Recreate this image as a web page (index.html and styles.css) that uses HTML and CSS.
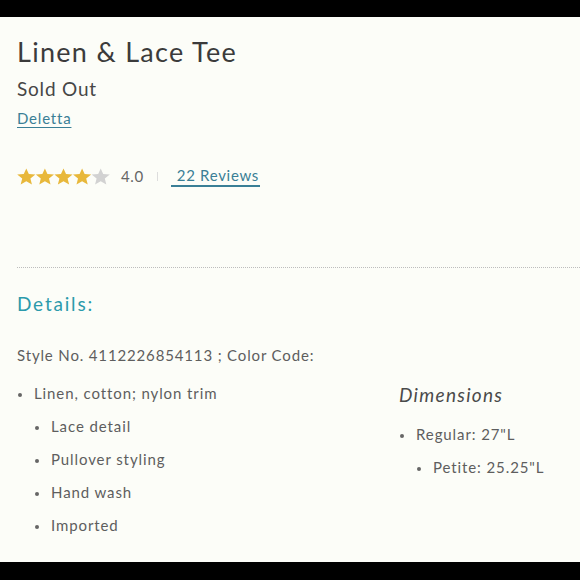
FILE: index.html
```html
<!DOCTYPE html>
<html lang="en">
<head>
    <meta charset="UTF-8">
    <meta name="viewport" content="width=device-width, initial-scale=1.0">
    <title>Linen &amp; Lace Tee</title>
    <link rel="stylesheet" href="styles.css">
</head>
<body>
    <div class="page">
        <div class="product">
            <h1 class="title">Linen &amp; Lace Tee</h1>
            <p class="status">Sold Out</p>
            <a class="brand" href="#">Deletta</a>
            <div class="rating">
                <svg class="stars" width="94" height="17" viewBox="0 0 94 17">
                    <defs>
                        <polygon id="star" points="9.3,0.5 11.83,6.12 18.4,6.61 13.4,10.57 14.93,16.49 9.3,13.32 3.67,16.49 5.2,10.57 0.2,6.61 6.77,6.12"/>
                    </defs>
                    <g fill="#e8b83b">
                        <use href="#star"/>
                        <use href="#star" x="18.6"/>
                        <use href="#star" x="37.2"/>
                        <use href="#star" x="55.8"/>
                    </g>
                    <use href="#star" x="74.4" fill="#d2d2d2"/>
                </svg>
                <span class="score">4.0</span>
                <span class="sep"></span>
                <a class="reviews" href="#">22 Reviews</a>
            </div>
        </div>

        <hr class="divider">

        <div class="details">
            <h2>Details:</h2>
            <p class="style-no">Style No. 4112226854113 ; Color Code:</p>
            <div class="cols">
                <ul class="list">
                    <li>Linen, cotton; nylon trim
                        <ul class="list">
                            <li>Lace detail</li>
                            <li>Pullover styling</li>
                            <li>Hand wash</li>
                            <li>Imported</li>
                        </ul>
                    </li>
                </ul>
                <div class="dims">
                    <h3>Dimensions</h3>
                    <ul class="list">
                        <li>Regular: 27"L
                            <ul class="list">
                                <li>Petite: 25.25"L</li>
                            </ul>
                        </li>
                    </ul>
                </div>
            </div>
        </div>
    </div>
</body>
</html>
```

FILE: styles.css
```css
html, body {
    margin: 0;
    background: #000;
}
body {
    padding: 17px 0 18px;
    font-family: "Lato", "Open Sans", sans-serif;
    color: #5e5e5e;
}
.page {
    height: 545px;
    overflow: hidden;
    background: #fcfdf8;
}
.product {
    padding: 0 17px;
}
.title {
    margin: 19px 0 0;
    font-size: 27px;
    line-height: 32px;
    font-weight: 400;
    letter-spacing: 1.3px;
    color: #3b3b3b;
}
.status {
    margin: 9px 0 0;
    font-size: 19px;
    line-height: 24px;
    letter-spacing: 0.8px;
    color: #464646;
}
.brand {
    display: inline-block;
    margin-top: 7px;
    font-size: 15px;
    line-height: 20px;
    letter-spacing: 0.8px;
    color: #3a7f96;
    text-decoration: underline;
    text-underline-offset: 3px;
}
.rating {
    display: flex;
    align-items: center;
    margin-top: 38px;
    height: 20px;
}
.stars {
    display: block;
}
.score {
    margin-left: 10px;
    font-size: 15px;
    letter-spacing: 0.6px;
    color: #666;
}
.sep {
    width: 1px;
    height: 9px;
    margin: 0 13px;
    background: #ddd;
}
.reviews {
    padding: 0 1px 0 6px;
    border-bottom: 2px solid #3a7f96;
    font-size: 15px;
    line-height: 20px;
    letter-spacing: 0.7px;
    color: #3a7f96;
    text-decoration: none;
}
.divider {
    margin: 81px 0 0 17px;
    border: 0;
    border-top: 1px dotted #bdbdbd;
}
.details {
    padding: 0 17px;
}
.details h2 {
    margin: 24px 0 0;
    font-size: 19px;
    line-height: 24px;
    font-weight: 400;
    letter-spacing: 1.8px;
    color: #2b9aab;
}
.style-no {
    margin: 29px 0 0;
    font-size: 15px;
    line-height: 20px;
    letter-spacing: 0.85px;
}
.cols {
    display: grid;
    grid-template-columns: 382px 1fr;
    margin-top: 12px;
}
.list {
    margin: 0;
    padding: 0;
    list-style: none;
}
.list .list {
    padding-left: 17px;
}
.list li {
    font-size: 15px;
    line-height: 33px;
    letter-spacing: 0.9px;
}
.list li::before {
    content: "";
    display: inline-block;
    width: 4px;
    height: 4px;
    margin: 0 12px 0 1px;
    border-radius: 50%;
    background: #666;
    vertical-align: middle;
}
.dims h3 {
    margin: 6px 0 11px;
    font-size: 19px;
    line-height: 24px;
    font-weight: 400;
    font-style: italic;
    letter-spacing: 1.3px;
    color: #4a4a4a;
}
```
